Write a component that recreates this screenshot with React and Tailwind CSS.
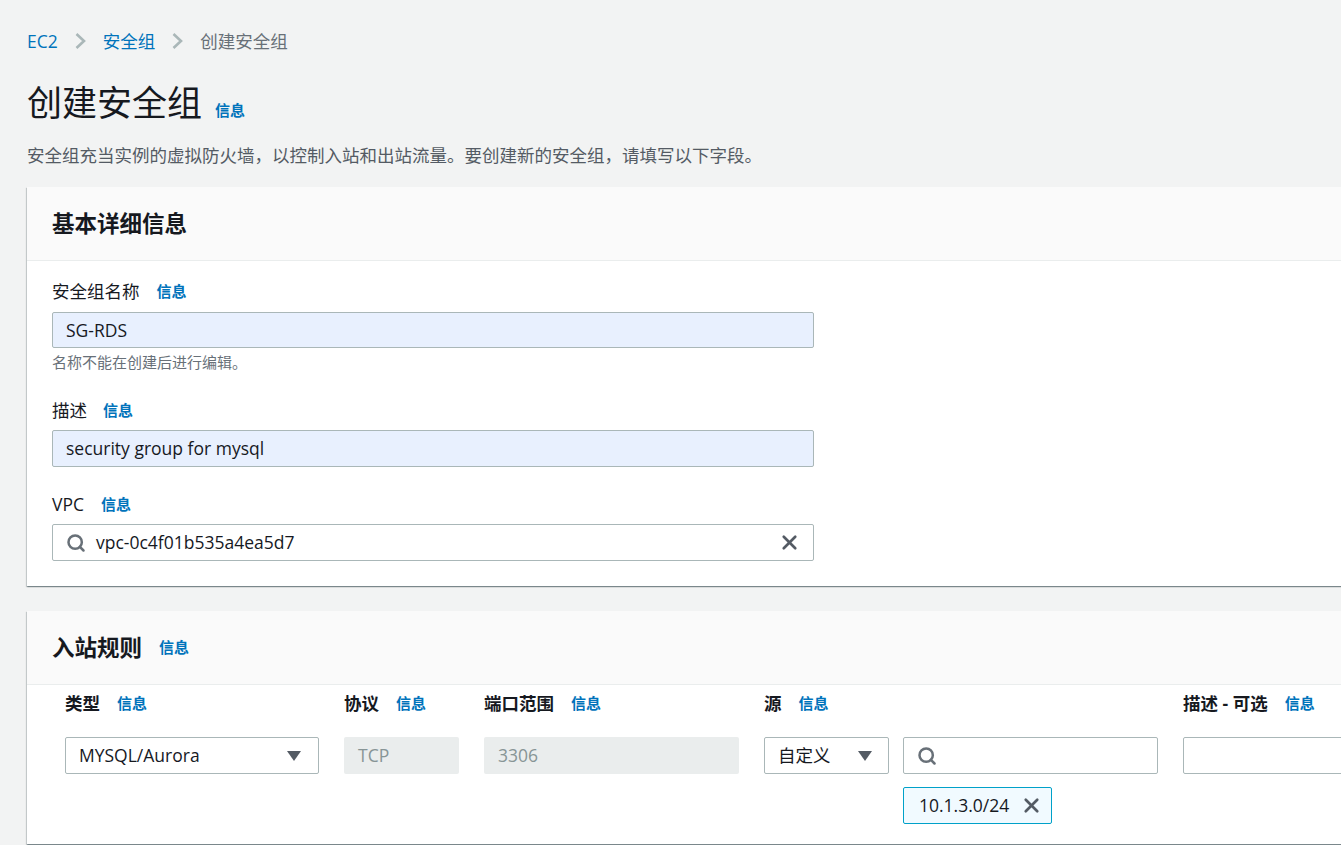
import React from "react";
import { Search, X } from "lucide-react";

const Info = ({ className = "" }) => (
    <span className={`text-[15px] font-bold text-[#0073bb] ${className}`}>信息</span>
);

const Caret = () => (
    <svg width="14" height="10" viewBox="0 0 14 10" className="shrink-0">
        <polygon points="0,0 14,0 7,10" fill="#545b64" />
    </svg>
);

const Chevron = () => (
    <svg width="13" height="18" viewBox="0 0 13 18" className="mx-[16px] shrink-0">
        <polyline points="2.5,2 10,9 2.5,16" fill="none" stroke="#aab7b8" strokeWidth="2.6" />
    </svg>
);

const Field = ({ label, infoGap, children }) => (
    <div>
        <div className="flex items-center h-6 text-[17.5px] text-[#16191f]">
            <span>{label}</span>
            <Info className={infoGap} />
        </div>
        {children}
    </div>
);

const cardShadow =
    "shadow-[0_1px_1px_0_rgba(0,28,36,0.3),1px_1px_1px_0_rgba(0,28,36,0.15),-1px_1px_1px_0_rgba(0,28,36,0.15)]";

export default function App() {
    return (
        <div className="w-full h-screen overflow-hidden bg-[#f2f3f3] font-['Open_Sans','Noto_Sans_CJK_SC',sans-serif] text-[#16191f]">
            <div className="pl-[27px] pt-[29px]">
                {/* breadcrumb */}
                <nav className="flex items-center h-6 text-[17.5px]">
                    <span className="text-[#0073bb]">EC2</span>
                    <Chevron />
                    <span className="text-[#0073bb]">安全组</span>
                    <Chevron />
                    <span className="text-[#687078]">创建安全组</span>
                </nav>

                <div className="flex items-baseline mt-[29px] h-[42px]">
                    <h1 className="text-[35px] leading-[42px] font-normal">创建安全组</h1>
                    <Info className="ml-[13px]" />
                </div>
                <p className="mt-[18px] text-[17.5px] leading-[26px] text-[#545b64]">
                    安全组充当实例的虚拟防火墙，以控制入站和出站流量。要创建新的安全组，请填写以下字段。
                </p>

                {/* basic details */}
                <section className={`mt-[19px] w-[1400px] bg-white ${cardShadow}`}>
                    <div className="bg-[#fafafa] border-b border-[#eaeded] h-[74px] flex items-center px-[25px]">
                        <h2 className="text-[22.5px] font-bold">基本详细信息</h2>
                    </div>
                    <div className="px-[25px] pt-[18px] pb-[25px]">
                        <Field label="安全组名称" infoGap="ml-[17px]">
                            <div className="mt-[9px] w-[762px] h-[36px] rounded-[2px] border border-[#aab7b8] bg-[#e8f0fe] flex items-center px-[13px] text-[17.5px]">
                                SG-RDS
                            </div>
                            <p className="mt-[4px] text-[15px] leading-5 text-[#687078]">名称不能在创建后进行编辑。</p>
                        </Field>

                        <div className="mt-[26px]">
                            <Field label="描述" infoGap="ml-[16px]">
                                <div className="mt-[8px] w-[762px] h-[37px] rounded-[2px] border border-[#aab7b8] bg-[#e8f0fe] flex items-center px-[13px] text-[17.5px]">
                                    security group for mysql
                                </div>
                            </Field>
                        </div>

                        <div className="mt-[25px]">
                            <Field label="VPC" infoGap="ml-[17px]">
                                <div className="mt-[8px] w-[762px] h-[37px] rounded-[2px] border border-[#aab7b8] bg-white flex items-center pl-[13px] pr-[12px] text-[17.5px]">
                                    <Search size={20} strokeWidth={3} className="text-[#687078]" />
                                    <span className="ml-[10px] flex-1">vpc-0c4f01b535a4ea5d7</span>
                                    <X size={23} strokeWidth={2.8} className="text-[#545b64]" />
                                </div>
                            </Field>
                        </div>
                    </div>
                </section>

                {/* inbound rules */}
                <section className={`mt-[25px] w-[1400px] bg-white ${cardShadow}`}>
                    <div className="bg-[#fafafa] border-b border-[#eaeded] h-[74px] flex items-center px-[25px]">
                        <h2 className="text-[22.5px] font-bold">入站规则</h2>
                        <Info className="ml-[17px]" />
                    </div>
                    <div className="pl-[38px] pt-[6px] pb-[20px]">
                        <div className="flex text-[17.5px] font-bold h-6 items-center">
                            <div className="w-[279px] shrink-0 flex items-center">类型<Info className="ml-[17px]" /></div>
                            <div className="w-[140px] shrink-0 flex items-center">协议<Info className="ml-[17px]" /></div>
                            <div className="w-[280px] shrink-0 flex items-center">端口范围<Info className="ml-[17px]" /></div>
                            <div className="w-[419px] shrink-0 flex items-center">源<Info className="ml-[17px]" /></div>
                            <div className="shrink-0 flex items-center">描述 - 可选<Info className="ml-[17px]" /></div>
                        </div>

                        <div className="flex mt-[22px] text-[17.5px]">
                            <div className="shrink-0 w-[254px] h-[37px] rounded-[2px] border border-[#aab7b8] flex items-center justify-between pl-[13px] pr-[17px]">
                                <span>MYSQL/Aurora</span>
                                <Caret />
                            </div>
                            <div className="shrink-0 ml-[25px] w-[115px] h-[37px] rounded-[2px] bg-[#eaeded] flex items-center px-[14px] text-[#879596]">
                                TCP
                            </div>
                            <div className="shrink-0 ml-[25px] w-[255px] h-[37px] rounded-[2px] bg-[#eaeded] flex items-center px-[14px] text-[#879596]">
                                3306
                            </div>
                            <div className="shrink-0 ml-[25px] w-[125px] h-[37px] rounded-[2px] border border-[#aab7b8] flex items-center justify-between pl-[13px] pr-[16px]">
                                <span>自定义</span>
                                <Caret />
                            </div>
                            <div className="shrink-0 ml-[14px]">
                                <div className="w-[255px] h-[37px] rounded-[2px] border border-[#aab7b8] flex items-center px-[13px]">
                                    <Search size={20} strokeWidth={3} className="text-[#687078]" />
                                </div>
                                <div className="mt-[13px] w-[149px] h-[37px] rounded-[2px] border border-[#00a1c9] bg-[#f1faff] flex items-center justify-between pl-[15px] pr-[8px]">
                                    <span>10.1.3.0/24</span>
                                    <X size={23} strokeWidth={2.8} className="text-[#545b64]" />
                                </div>
                            </div>
                            <div className="shrink-0 ml-[25px] w-[300px] h-[37px] rounded-[2px] border border-[#aab7b8]" />
                        </div>
                    </div>
                </section>
            </div>
        </div>
    );
}
